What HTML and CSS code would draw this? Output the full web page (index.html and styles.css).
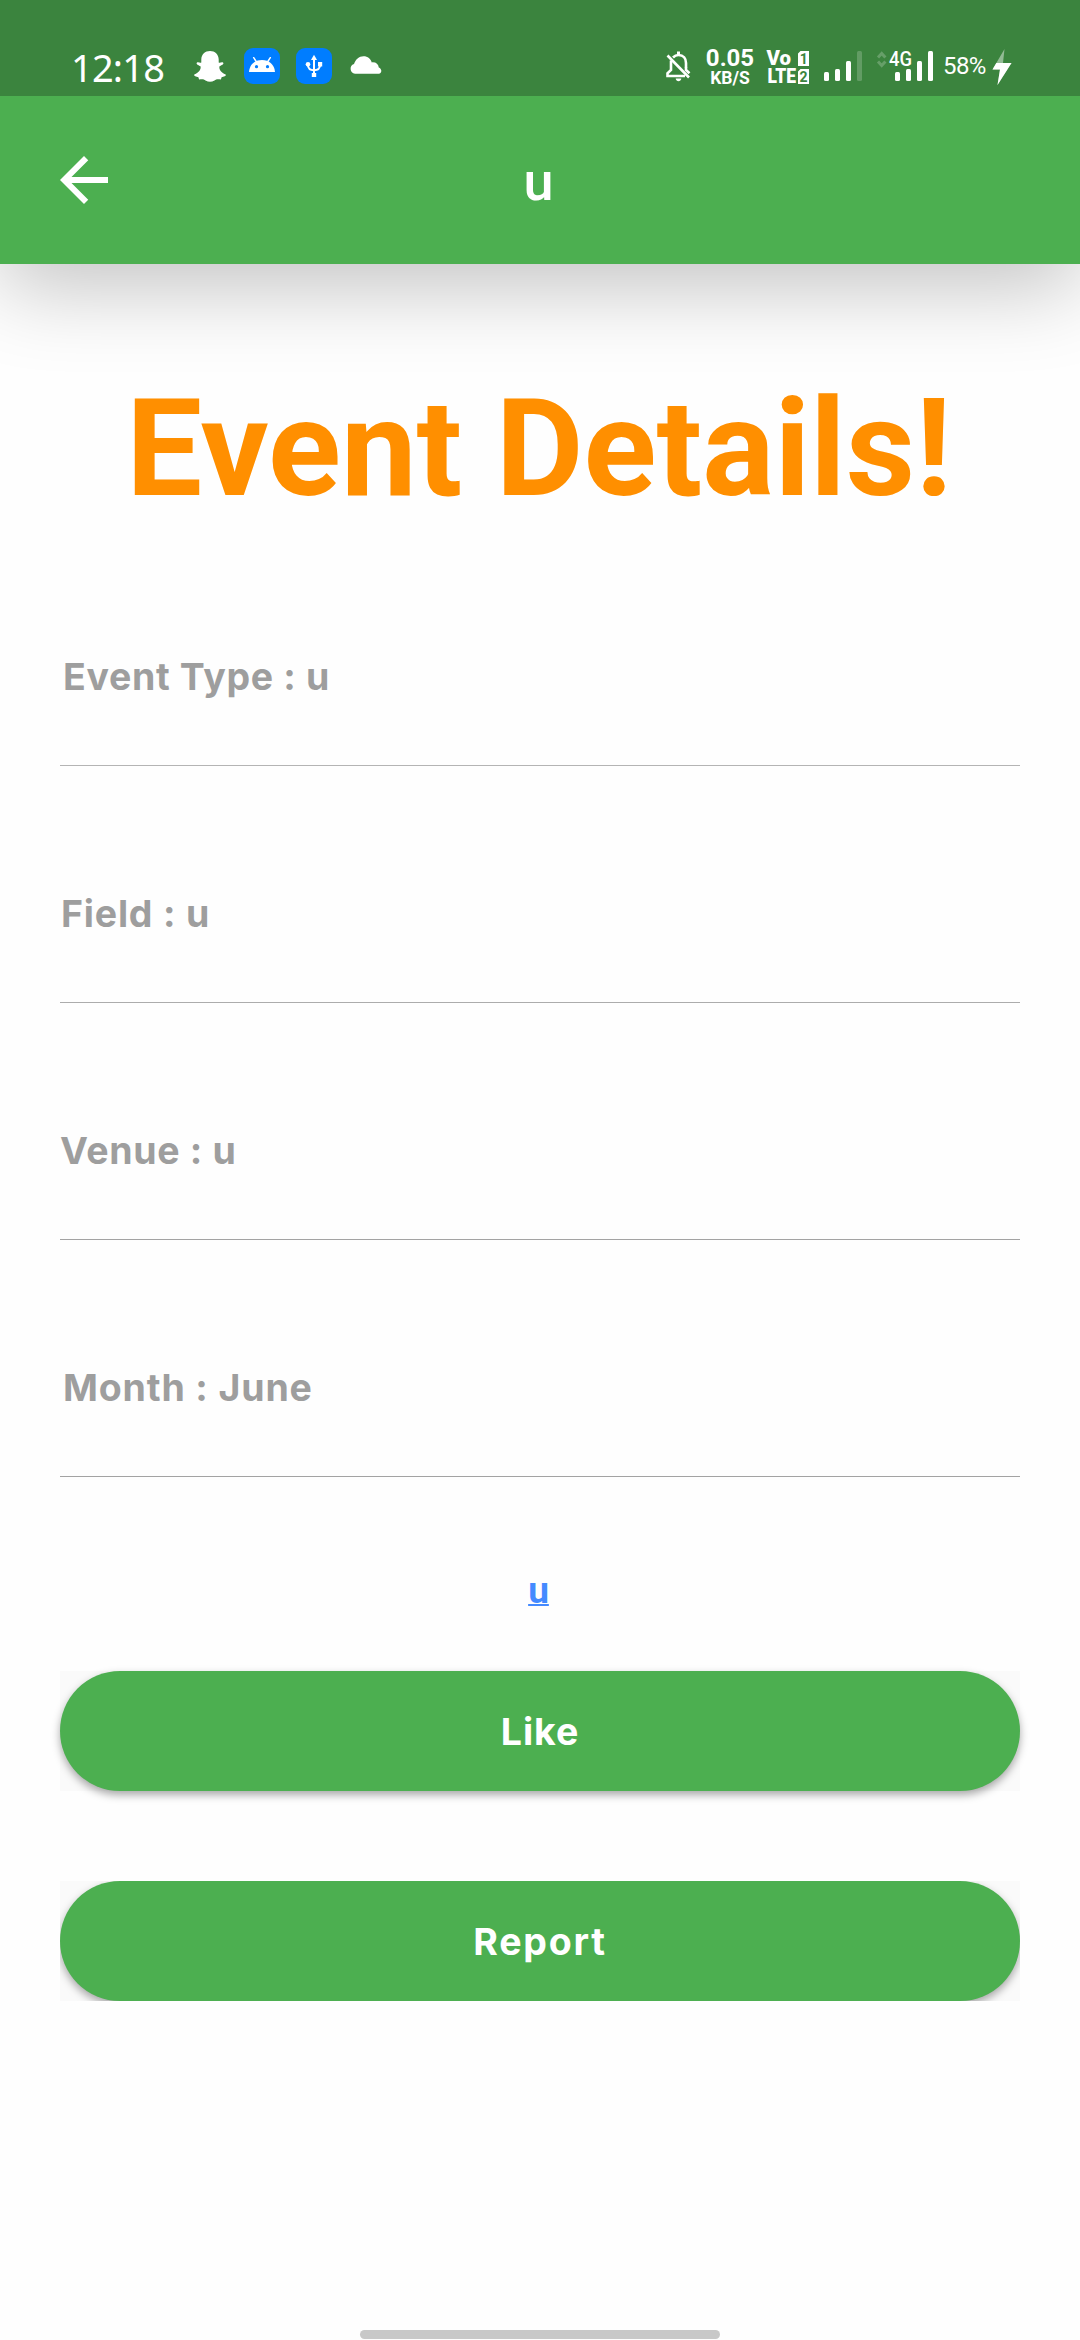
FILE: index.html
```
<!DOCTYPE html>
<html lang="en">
<head>
<meta charset="utf-8">
<title>Event Details</title>
<link rel="stylesheet" href="styles.css">
</head>
<body>
<div class="status-bar">
  <div class="status-left">
    <span class="clock">12:18</span>
    <svg class="icon-snap" width="34" height="34" viewBox="0 0 34 34" fill="#fff"><path d="M17 2c5 0 8.500 3.500 8.700 8.200v3.300c1.300.8 3.100-1 4.500.2 1 1.500-1.700 2.500-3.700 3.600-.8 3 1.400 6 6.200 8.300.8 1.600-2 2.300-4.100 2.700l-.7 2.300c-3.500-.7-4.800-.2-6.400.8-2.900 1.800-6.100 1.800-9 0-1.600-1-2.900-1.500-6.400-.8l-.7-2.300C3.300 27.900.5 27.200 1.300 25.600c4.800-2.300 7-5.300 6.200-8.300-2-1.100-4.700-2.100-3.700-3.600 1.400-1.200 3.200.6 4.500-.2v-3.300C8.500 5.500 12 2 17 2z"/></svg>
    <svg class="icon-android" width="36" height="36" viewBox="0 0 36 36"><rect width="36" height="36" rx="9" fill="#007dff"/><path d="M5 24c.5-7.500 6-12 13-12s12.500 4.500 13 12z" fill="#fff"/><path d="M12.500 14 9.700 9.700M23.500 14l2.800-4.300" stroke="#fff" stroke-width="1.500" stroke-linecap="round"/><circle cx="12.500" cy="18.700" r="1.600" fill="#007dff"/><circle cx="23.500" cy="18.700" r="1.600" fill="#007dff"/></svg>
    <svg class="icon-usb" width="36" height="36" viewBox="0 0 36 36"><rect width="36" height="36" rx="9" fill="#007dff"/><path d="M18 10v17M11.800 16.500c.2 4 2.500 5.800 6.200 5.800s6-1.800 6.200-5.800" fill="none" stroke="#fff" stroke-width="2"/><path d="M18 6.700l3 5.300h-6z" fill="#fff"/><circle cx="12" cy="16.300" r="2.300" fill="#fff"/><path d="M22 14h4.200v4.500H22zM15.800 25h4.400v4h-4.400z" fill="#fff"/></svg>
    <svg class="icon-cloud" width="32" height="18" viewBox="0 0 32 18" fill="#fff"><path d="M5 17.700a5 5 0 0 1-1-9.700C5.500 3.500 9 .2 13.500.2c4.300 0 7.300 2.600 8.300 6.200 4.200-.4 6.500 1.800 7 5 3.300 1.300 3.500 5.600 0 6.300z"/></svg>
  </div>
  <div class="status-right">
    <svg class="icon-bell" width="27" height="32" viewBox="0 0 27 32" fill="none" stroke="#fff" stroke-width="2.600"><path d="M8 7.500C10 5.400 11 5 13.500 5c5 0 7.500 3.500 7.500 8v5M6 10.500V20l-3.500 3.300V26H20"/><path d="M2.500 5.500 24 27.500M21 17.500v2.500l3.500 3.300"/><path d="M13.500 1.500V5" stroke-width="3"/><path d="M10.700 28.500h5.600c-.4 3.500-5.200 3.500-5.600 0z" fill="#fff" stroke="none"/></svg>
    <div class="speed"><span class="speed-value">0.05</span><span class="speed-unit">KB/S</span></div>
    <svg class="icon-volte" width="44" height="36" viewBox="0 0 44 36"><g class="volte-text"><text x="0.500" y="17" font-size="20" textLength="24.500" lengthAdjust="spacingAndGlyphs">Vo</text><text x="1.500" y="35" font-size="20" textLength="28.500" lengthAdjust="spacingAndGlyphs">LTE</text></g><path d="M34.500 3h8.500v15H32V5.500zM34.500 21h8.500v15H32V23.500z" fill="#fff"/><g class="volte-number"><text x="33.800" y="15.500">1</text><text x="33.500" y="33.500">2</text></g></svg>
    <svg class="icon-signal" width="38" height="30" viewBox="0 0 38 30" fill="#fff"><rect y="21" width="5" height="9" rx="1.500"/><rect x="11" y="18" width="5" height="12" rx="1.500"/><rect x="22" y="10" width="5" height="20" rx="1.500"/><rect x="33" width="5" height="30" rx="1.500" opacity=".2"/></svg>
    <svg class="icon-network" width="56" height="30" viewBox="0 0 56 30" fill="#fff"><path d="M1 6.500 4.700 2.500 8.400 6.500M1 10.500l3.700 4 3.700-4" fill="none" stroke="#fff" stroke-width="3" opacity=".22"/><text class="network-text" x="12" y="15.300" textLength="23" lengthAdjust="spacingAndGlyphs">4G</text><rect x="18" y="21" width="5" height="9" rx="1.500"/><rect x="29" y="18" width="5" height="12" rx="1.500"/><rect x="40" y="10" width="5" height="20" rx="1.500"/><rect x="51" width="5" height="30" rx="1.500"/></svg>
    <span class="battery">58%</span>
    <svg class="icon-bolt" width="20" height="36" viewBox="0 0 20 36" fill="#fff"><path d="M12.500 0 .500 20.500H8L5.500 36 19.500 14H11z" opacity=".45"/><path d="M4.300 14h15.200L5.500 36 8 20.500H.500z"/></svg>
  </div>
</div>
<header class="app-bar">
  <svg class="back" width="72" height="72" viewBox="0 0 24 24" fill="#fff"><path d="M20 11H7.830l5.590-5.590L12 4l-8 8 8 8 1.410-1.410L7.830 13H20v-2z"/></svg>
  <span class="app-title">u</span>
</header>
<main class="content">
  <h1 class="heading">Event Details!</h1>
  <div class="field field-type"><span>Event Type : u</span></div>
  <div class="field field-name"><span>Field : u</span></div>
  <div class="field field-venue"><span>Venue : u</span></div>
  <div class="field field-month"><span>Month : June</span></div>
  <a class="link">u</a>
  <div class="action"><button class="button like">Like</button></div>
  <div class="action action-last"><button class="button report">Report</button></div>
</main>
<div class="home-indicator"></div>
</body>
</html>
```
FILE: styles.css
```
* { box-sizing: border-box; }

body {
  margin: 0;
  width: 1080px;
  height: 2340px;
  display: flex;
  flex-direction: column;
  overflow: hidden;
  background: #fefefe;
  font-family: Roboto, sans-serif;
}

svg { display: block; flex: none; overflow: visible; }

/* Status bar */
.status-bar {
  height: 96px;
  flex: none;
  display: flex;
  justify-content: space-between;
  background: #3b843e;
  color: #fff;
  z-index: 1;
}
.status-left, .status-right { display: flex; align-items: flex-start; }
.status-left { padding-left: 71px; }
.status-right { padding-right: 68px; }
.clock {
  width: 122px;
  margin-top: 47px;
  font: 400 38px/40px "Noto Sans", sans-serif;
  letter-spacing: -0.800px;
}
.icon-snap { margin-top: 49px; }
.icon-android { margin: 48px 0 0 17px; }
.icon-usb { margin: 48px 0 0 16px; }
.icon-cloud { margin: 56px 0 0 18px; }
.icon-bell { margin-top: 50px; }
.speed {
  width: 58px;
  margin: 47px 7px 0 9px;
  display: flex;
  flex-direction: column;
  align-items: center;
  font-weight: 700;
}
.speed-value { font-size: 24px; line-height: 22px; }
.speed-unit { font-size: 17.500px; line-height: 18px; }
.icon-volte { margin-top: 48px; }
.volte-text { fill: #fff; font-weight: 900; }
.volte-number { fill: #3b843e; font-size: 14px; font-weight: 700; }
.icon-signal { margin: 51px 0 0 14px; }
.icon-network { margin: 51px 0 0 15px; }
.network-text { font-size: 20px; font-weight: 500; }
.battery {
  width: 48px;
  margin: 52px 0 0 10px;
  font-size: 24px;
  line-height: 28px;
  letter-spacing: -0.600px;
}
.icon-bolt { margin: 49px 0 0 1px; }

/* App bar */
.app-bar {
  height: 168px;
  flex: none;
  display: grid;
  grid-template-columns: 72px 1fr 72px;
  align-items: center;
  padding: 0 51px 0 48px;
  background: #4caf50;
  color: #fff;
  box-shadow: 0 24px 84px 0 rgba(0, 0, 0, 0.230);
}
.app-title {
  padding-top: 4px;
  font-size: 54px;
  font-weight: 500;
  line-height: 60px;
  text-align: center;
}

/* Event details */
.content {
  flex: 1;
  display: flex;
  flex-direction: column;
  padding: 105px 60px 0;
}
.heading {
  margin: 0;
  padding-right: 2px;
  color: #ff8f00;
  font-size: 135px;
  font-weight: 700;
  line-height: 160px;
  text-align: center;
  white-space: nowrap;
}
.field {
  height: 237px;
  padding: 124px 0 0 3px;
  border-bottom: 1px solid #a3a3a3;
  color: #9e9e9e;
  font: 700 37.500px/48px Inter, sans-serif;
}
.field-type { letter-spacing: 0.660px; border-color: #b4b4b4; }
.field-name { padding-left: 1px; letter-spacing: 0.800px; border-color: #acacac; }
.field-venue { padding-left: 0; letter-spacing: 0.650px; }
.field-month { letter-spacing: 0.840px; }
.link {
  margin-top: 94px;
  padding-right: 3px;
  color: #448aff;
  font-size: 37px;
  font-weight: 700;
  line-height: 40px;
  text-align: center;
  text-decoration: underline;
  text-decoration-thickness: 2px;
  text-underline-offset: 1px;
}

/* Buttons on their light backing boxes */
.action {
  height: 120px;
  margin-top: 60px;
  background: #fafafa;
}
.action-last {
  margin-top: 90px;
  overflow: hidden;
}
.button {
  display: block;
  width: 100%;
  height: 120px;
  padding: 1px 0 0;
  border: 0;
  border-radius: 60px;
  background: #4caf50;
  color: #fff;
  box-shadow: 0 4px 9px rgba(0, 0, 0, 0.340);
  font: 700 37.500px/48px Inter, sans-serif;
}
.like { letter-spacing: 1px; }
.report { letter-spacing: 1.800px; }

.home-indicator {
  width: 360px;
  height: 9px;
  flex: none;
  margin: 0 auto 1px;
  border-radius: 5px;
  background: #c8c8c8;
}
```
